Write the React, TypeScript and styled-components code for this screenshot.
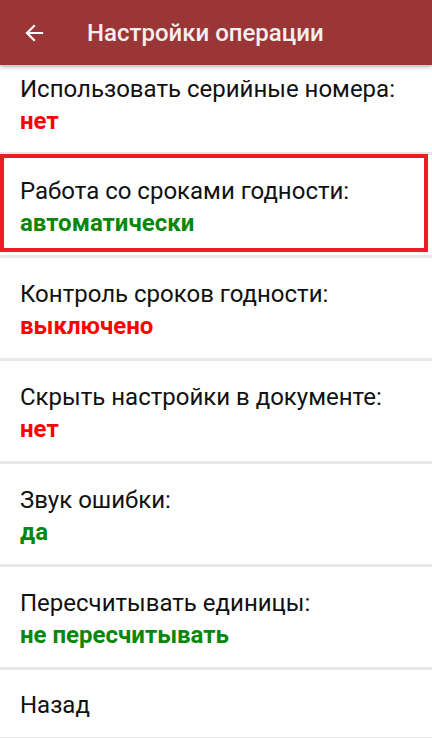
import React from "react";
import styled, { createGlobalStyle } from "styled-components";

type Tone = "red" | "green";

interface Setting {
    label: string;
    value: string;
    tone: Tone;
}

const settings: Setting[] = [
    { label: "Использовать серийные номера:", value: "нет", tone: "red" },
    { label: "Работа со сроками годности:", value: "автоматически", tone: "green" },
    { label: "Контроль сроков годности:", value: "выключено", tone: "red" },
    { label: "Скрыть настройки в документе:", value: "нет", tone: "red" },
    { label: "Звук ошибки:", value: "да", tone: "green" },
    { label: "Пересчитывать единицы:", value: "не пересчитывать", tone: "green" },
];

const GlobalStyle = createGlobalStyle`
    html, body {
        margin: 0;
        padding: 0;
        background: #fff;
    }
    body {
        font-family: Roboto, "Noto Sans", sans-serif;
        overflow: hidden;
    }
`;

export default function App() {
    return (
        <>
            <GlobalStyle />
            <Screen>
                <AppBar>
                    <BackButton aria-label="Назад">
                        <svg width="20" height="20" viewBox="0 0 20 20">
                            <path
                                d="M18 10H3M10 3L3 10l7 7"
                                fill="none"
                                stroke="#fff"
                                strokeWidth="2.2"
                                strokeLinecap="square"
                            />
                        </svg>
                    </BackButton>
                    <Title>Настройки операции</Title>
                </AppBar>
                <List>
                    {settings.map((s, i) => (
                        <Item key={s.label} $partial={i === 0} $highlight={i === 1}>
                            <Label>{s.label}</Label>
                            <Value $tone={s.tone}>{s.value}</Value>
                        </Item>
                    ))}
                    <BackItem>
                        <Label>Назад</Label>
                    </BackItem>
                </List>
            </Screen>
        </>
    );
}

const Screen = styled.div`
    width: 432px;
    height: 738px;
    display: flex;
    flex-direction: column;
    overflow: hidden;
    background: #fff;
`;

const AppBar = styled.header`
    position: relative;
    z-index: 2;
    flex: 0 0 65px;
    display: flex;
    align-items: center;
    background: #9b3636;
    box-shadow: 0 2px 4px rgba(0, 0, 0, 0.28);
`;

const BackButton = styled.div`
    width: 48px;
    height: 48px;
    margin-left: 10px;
    display: flex;
    align-items: center;
    justify-content: center;
`;

const Title = styled.h1`
    margin: 0 0 0 29px;
    font-size: 24px;
    font-weight: 500;
    color: #f4f0f0;
`;

const List = styled.div`
    display: flex;
    flex-direction: column;
`;

const Item = styled.div<{ $partial?: boolean; $highlight?: boolean }>`
    position: relative;
    display: flex;
    flex-direction: column;
    box-sizing: border-box;
    height: ${p => (p.$partial ? "90px" : "103px")};
    padding: ${p => (p.$partial ? "8px" : "20px")} 20px 0;
    border-bottom: 3px solid #e8e8e8;

    ${p =>
        p.$highlight &&
        `
        &::after {
            content: "";
            position: absolute;
            left: 0;
            right: 4px;
            top: -1px;
            bottom: 3px;
            border: 4px solid #ed1c24;
        }
    `}
`;

const BackItem = styled(Item)`
    height: 70px;
    padding-top: 19px;
`;

const Label = styled.div`
    font-size: 24px;
    line-height: 32px;
    color: #111;
`;

const Value = styled.div<{ $tone: Tone }>`
    font-size: 24px;
    line-height: 32px;
    font-weight: 700;
    color: ${p => (p.$tone === "red" ? "#ff0000" : "#0a870a")};
`;
